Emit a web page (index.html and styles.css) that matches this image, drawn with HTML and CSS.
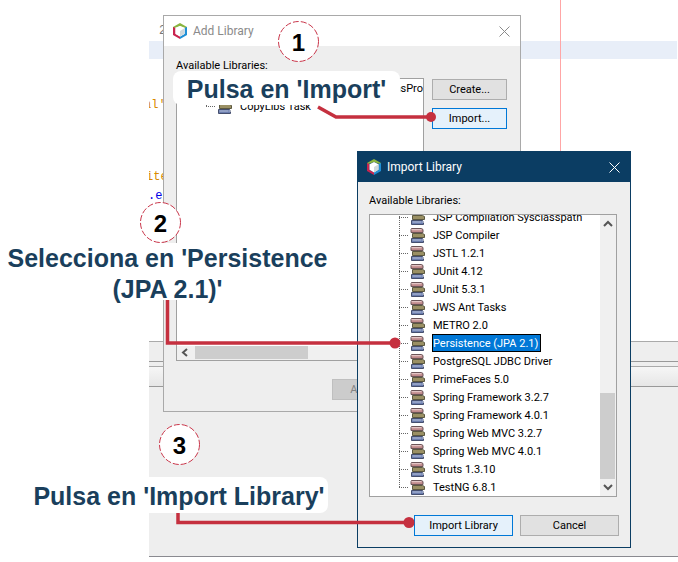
FILE: index.html
```html
<!DOCTYPE html>
<html lang="es">
<head>
    <meta charset="UTF-8">
    <title>Import Library</title>
    <link rel="stylesheet" href="styles.css">
</head>
<body>
    <svg class="defs" width="0" height="0">
        <symbol id="nb" viewBox="0 0 16 16">
            <polygon points="8,0 15,4 15,5.5 8,3 1,5.5 1,4" fill="#8ab53f"/>
            <polygon points="1,4 3.5,5 3.5,11 8,13.5 8,16 1,12" fill="#c9244f"/>
            <polygon points="15,4 12.5,5 12.5,11 8,13.5 8,16 15,12" fill="#1f8fd6"/>
            <polygon points="8,3 12.5,5.3 12.5,10.8 8,13.4 3.5,10.8 3.5,5.3" fill="#fff"/>
            <polygon points="8,8 12.5,5.3 12.5,10.8 8,13.4" fill="#cfd8dc"/>
        </symbol>
        <symbol id="books" viewBox="0 0 15 15">
            <path d="M1.5 .5h10l1.500 1v3h-12v-3z" fill="#c08a8c" stroke="#6b5558"/>
            <path d="M1.500 1.700h10" stroke="#ecd3d3" fill="none"/>
            <path d="M2.500 5.500h10l2 1v3h-12z" fill="#9a9064" stroke="#5b5840"/>
            <path d="M1.500 10.500h11l1 1v3h-12z" fill="#6b7dae" stroke="#454f6e"/>
            <path d="M12.500 12h2v-2" stroke="#fff" fill="none"/>
            <path d="M2.500 12h9" stroke="#b9c4dc" fill="none"/>
        </symbol>
    </svg>

    <div class="stage">
        <div class="editor">
            <div class="band"></div>
            <span class="gutter-line"></span>
            <span class="code code-dark code-a">2</span>
            <span class="code code-orange code-b">al'</span>
            <span class="code code-orange code-c">ite</span>
            <span class="code code-blue code-d">.ex</span>
        </div>
        <div class="ide-panel">
            <div class="panel-head"></div>
            <div class="panel-tabs"></div>
            <div class="panel-rest"></div>
        </div>

        <div class="dialog dialog-add">
            <div class="titlebar">
                <svg class="app-icon"><use href="#nb"/></svg>
                <span class="title">Add Library</span>
                <svg class="close" viewBox="0 0 11 11"><path d="M.5 .5l10 10M10.500 .5l-10 10"/></svg>
            </div>
            <div class="dialog-body">
                <div class="caption">Available Libraries:</div>
                <div class="list-line">
                    <div class="list list-add">
                        <div class="rows">
                            <div class="row row-clipped"><span class="name">nsPro</span></div>
                            <div class="row row-last">
                                <span class="branch"></span>
                                <svg class="book"><use href="#books"/></svg>
                                <span class="name">CopyLibs Task</span>
                            </div>
                        </div>
                        <div class="hscroll">
                            <svg class="arrow" viewBox="0 0 17 13"><path d="M10 3l-4 3.500 4 3.500"/></svg>
                            <div class="hthumb"></div>
                        </div>
                    </div>
                    <div class="actions">
                        <button class="btn">Create...</button>
                        <button class="btn btn-focus">Import...</button>
                    </div>
                </div>
                <div class="footer-add"><button class="btn btn-off">Add Library</button></div>
            </div>
        </div>

        <div class="dialog dialog-import">
            <div class="titlebar titlebar-dark">
                <svg class="app-icon"><use href="#nb"/></svg>
                <span class="title">Import Library</span>
                <svg class="close" viewBox="0 0 11 11"><path d="M.5 .5l10 10M10.500 .5l-10 10"/></svg>
            </div>
            <div class="dialog-body">
                <div class="caption">Available Libraries:</div>
                <div class="list list-import">
                    <div class="rows rows-scrolled">
                        <div class="row"><span class="branch"></span><svg class="book"><use href="#books"/></svg><span class="name">JSP Compilation Sysclasspath</span></div>
                        <div class="row"><span class="branch"></span><svg class="book"><use href="#books"/></svg><span class="name">JSP Compiler</span></div>
                        <div class="row"><span class="branch"></span><svg class="book"><use href="#books"/></svg><span class="name">JSTL 1.2.1</span></div>
                        <div class="row"><span class="branch"></span><svg class="book"><use href="#books"/></svg><span class="name">JUnit 4.12</span></div>
                        <div class="row"><span class="branch"></span><svg class="book"><use href="#books"/></svg><span class="name">JUnit 5.3.1</span></div>
                        <div class="row"><span class="branch"></span><svg class="book"><use href="#books"/></svg><span class="name">JWS Ant Tasks</span></div>
                        <div class="row"><span class="branch"></span><svg class="book"><use href="#books"/></svg><span class="name">METRO 2.0</span></div>
                        <div class="row"><span class="branch"></span><svg class="book"><use href="#books"/></svg><span class="name selected">Persistence (JPA 2.1)</span></div>
                        <div class="row"><span class="branch"></span><svg class="book"><use href="#books"/></svg><span class="name">PostgreSQL JDBC Driver</span></div>
                        <div class="row"><span class="branch"></span><svg class="book"><use href="#books"/></svg><span class="name">PrimeFaces 5.0</span></div>
                        <div class="row"><span class="branch"></span><svg class="book"><use href="#books"/></svg><span class="name">Spring Framework 3.2.7</span></div>
                        <div class="row"><span class="branch"></span><svg class="book"><use href="#books"/></svg><span class="name">Spring Framework 4.0.1</span></div>
                        <div class="row"><span class="branch"></span><svg class="book"><use href="#books"/></svg><span class="name">Spring Web MVC 3.2.7</span></div>
                        <div class="row"><span class="branch"></span><svg class="book"><use href="#books"/></svg><span class="name">Spring Web MVC 4.0.1</span></div>
                        <div class="row"><span class="branch"></span><svg class="book"><use href="#books"/></svg><span class="name">Struts 1.3.10</span></div>
                        <div class="row row-last"><span class="branch"></span><svg class="book"><use href="#books"/></svg><span class="name">TestNG 6.8.1</span></div>
                    </div>
                    <div class="vscroll">
                        <svg class="arrow-v" viewBox="0 0 16 17"><path d="M4 11l4-4 4 4"/></svg>
                        <div class="vtrack"><div class="vthumb"></div></div>
                        <svg class="arrow-v" viewBox="0 0 16 17"><path d="M4 6l4 4 4-4"/></svg>
                    </div>
                </div>
                <div class="footer-import">
                    <button class="btn btn-wide btn-focus">Import Library</button>
                    <button class="btn btn-wide">Cancel</button>
                </div>
            </div>
        </div>

        <svg class="connectors" viewBox="0 0 678 562">
            <path d="M318 107l18 10h95"/>
            <circle cx="431" cy="117" r="5"/>
            <path d="M167.500 300v43H395"/>
            <circle cx="395" cy="343" r="5.500"/>
            <path d="M178 513v9.500h231"/>
            <circle cx="409" cy="522.500" r="5.500"/>
        </svg>

        <div class="step step-1"><svg class="ring" viewBox="0 0 41 41"><circle cx="20.500" cy="20.500" r="20"/></svg><span class="digit">1</span></div>
        <div class="step step-2"><svg class="ring" viewBox="0 0 41 41"><circle cx="20.500" cy="20.500" r="20"/></svg><span class="digit">2</span></div>
        <div class="step step-3"><svg class="ring" viewBox="0 0 41 41"><circle cx="20.500" cy="20.500" r="20"/></svg><span class="digit">3</span></div>

        <div class="note note-1">Pulsa en 'Import'</div>
        <div class="note note-2">Selecciona en 'Persistence<br>(JPA 2.1)'</div>
        <div class="note note-3">Pulsa en 'Import Library'</div>
    </div>
</body>
</html>
```

FILE: styles.css
```css
* {
    box-sizing: border-box;
}
body {
    margin: 0;
    background-color: #fff;
    font-family: Roboto, "Noto Sans", sans-serif;
    font-size: 11px;
    color: #000;
}
.defs {
    display: block;
    height: 0;
}
.stage {
    position: relative;
    width: 678px;
    height: 562px;
    overflow: hidden;
}

/* ide behind the dialogs */
.editor {
    position: relative;
    height: 341px;
    padding: 41px 1px 0 149px;
}
.band {
    height: 18px;
    background-color: #e8eef8;
}
.gutter-line {
    position: absolute;
    left: 560px;
    top: 0;
    width: 1px;
    height: 341px;
    background-color: #ffa6a6;
}
.code {
    position: absolute;
    left: 149px;
    width: 15px;
    overflow: hidden;
    white-space: nowrap;
    font-family: "Liberation Mono", monospace;
    font-size: 12px;
    line-height: 14px;
}
.code-dark {
    color: #777;
}
.code-orange {
    color: #d98a00;
}
.code-blue {
    color: #0000e6;
}
.code-a {
    left: 159px;
    width: 5px;
    top: 24px;
}
.code-b {
    top: 98px;
    text-indent: -5px;
}
.code-c {
    top: 170px;
    text-indent: -3px;
}
.code-d {
    top: 189px;
    text-indent: -1px;
}
.ide-panel {
    height: 216px;
    margin-left: 149px;
    background-color: #eee;
    border-top: 1px solid #aaa;
    border-bottom: 1px solid #8a8a90;
    display: flex;
    flex-direction: column;
}
.panel-head {
    height: 20px;
    border-bottom: 1px solid #999;
}
.panel-tabs {
    height: 21px;
    margin-top: 4px;
    border-top: 1px solid #aaa;
    border-bottom: 1px solid #999;
    background: linear-gradient(#f6f6f6, #e6e6e6);
}
.panel-rest {
    flex: 1;
}

/* dialogs */
.dialog {
    position: absolute;
    display: flex;
    flex-direction: column;
    height: 397px;
    background-color: #eee;
    border: 1px solid #a9a9a9;
}
.dialog-add {
    left: 163px;
    top: 15px;
    width: 358px;
}
.dialog-import {
    left: 357px;
    top: 151px;
    width: 274px;
    border-color: #0b3d63;
}
.titlebar {
    display: flex;
    align-items: center;
    height: 30px;
    padding: 0 10px 0 8px;
    background-color: #fff;
    color: #8a8a8a;
}
.titlebar-dark {
    background-color: #0b3d63;
    color: #fff;
}
.app-icon {
    width: 16px;
    height: 16px;
    flex: none;
}
.title {
    flex: 1;
    margin-left: 5px;
    font-size: 12px;
}
.close {
    width: 11px;
    height: 11px;
    stroke: #8a8a8a;
    fill: none;
}
.titlebar-dark .close {
    stroke: #fff;
}
.dialog-body {
    flex: 1;
    padding: 12px 12px 0;
}
.dialog-import .dialog-body {
    padding: 11px 11px 0;
}
.caption {
    height: 14px;
    line-height: 16px;
    margin-bottom: 6px;
}
.dialog-import .caption {
    margin-bottom: 7px;
}
.list-line {
    display: flex;
    gap: 8px;
}
.list {
    display: flex;
    width: 248px;
    height: 283px;
    background-color: #fff;
    border: 1px solid #a0a0a0;
    overflow: hidden;
}
.list-add {
    flex-direction: column;
    flex: none;
}
.rows {
    flex: 1;
    min-width: 0;
    overflow: hidden;
}
.rows-scrolled .row:first-child {
    margin-top: -7px;
}
.row {
    display: flex;
    align-items: center;
    height: 18px;
    padding-left: 29px;
    white-space: nowrap;
}
.row-clipped {
    justify-content: flex-end;
    padding-left: 0;
    margin-right: -3px;
}
.branch {
    flex: none;
    align-self: stretch;
    width: 11px;
    background-image:
        repeating-linear-gradient(to bottom, #666 0 1px, transparent 1px 2px),
        repeating-linear-gradient(to right, #666 0 1px, transparent 1px 2px);
    background-size: 1px 100%, 10px 1px;
    background-position: 0 0, 0 9px;
    background-repeat: no-repeat;
}
.row-last .branch {
    background-size: 1px 10px, 10px 1px;
}
.book {
    flex: none;
    width: 15px;
    height: 15px;
}
.name {
    margin-left: 7px;
    padding: 0 3px 0 1px;
    height: 18px;
    line-height: 20px;
}
.selected {
    background-color: #0078d7;
    color: #fff;
    box-shadow: inset 0 0 0 1px #000;
}

/* scrollbars */
.hscroll {
    display: flex;
    flex: none;
    height: 14px;
    background-color: #f0f0f0;
}
.arrow {
    width: 17px;
    height: 13px;
    flex: none;
    fill: none;
    stroke: #555;
    stroke-width: 2;
}
.hthumb {
    width: 113px;
    height: 13px;
    margin-left: 1px;
    background-color: #cdcdcd;
}
.vscroll {
    display: flex;
    flex-direction: column;
    flex: none;
    width: 16px;
    background-color: #f0f0f0;
}
.arrow-v {
    width: 16px;
    height: 17px;
    flex: none;
    fill: none;
    stroke: #555;
    stroke-width: 2;
}
.vtrack {
    flex: 1;
    padding: 161px 1px 0 0;
}
.vthumb {
    height: 100%;
    background-color: #cdcdcd;
}

/* buttons */
.btn {
    display: block;
    width: 75px;
    height: 21px;
    padding: 0;
    background-color: #e1e1e1;
    border: 1px solid #adadad;
    font-family: inherit;
    font-size: 11px;
    color: #000;
}
.btn-focus {
    background-color: #e5f1fb;
    border-color: #0078d7;
}
.btn-off {
    width: 92px;
    background-color: #ccc;
    border-color: #bfbfbf;
    color: #838383;
}
.btn-wide {
    width: 99px;
}
.actions {
    display: flex;
    flex-direction: column;
    gap: 8px;
    padding-top: 1px;
}
.footer-add {
    margin-top: 18px;
    padding-left: 156px;
}
.footer-import {
    display: flex;
    gap: 7px;
    margin-top: 18px;
    padding-left: 45px;
}

/* annotations on top of the screenshot */
.connectors {
    position: absolute;
    left: 0;
    top: 0;
    width: 678px;
    height: 562px;
    fill: none;
    stroke: #c5303f;
    stroke-width: 3.5;
}
.connectors circle {
    fill: #c5303f;
    stroke: none;
}
.step {
    position: absolute;
    display: flex;
    align-items: center;
    justify-content: center;
    width: 41px;
    height: 41px;
    padding-top: 3px;
    font-family: "Liberation Sans", Arial, sans-serif;
    font-size: 24px;
    font-weight: bold;
}
.ring {
    position: absolute;
    left: 0;
    top: 0;
    width: 41px;
    height: 41px;
    fill: #fff;
    stroke: #c9364a;
    stroke-width: 1;
    stroke-dasharray: 6 2;
}
.digit {
    position: relative;
}
.step-1 {
    left: 278px;
    top: 21px;
}
.step-2 {
    left: 140px;
    top: 202px;
}
.step-3 {
    left: 159px;
    top: 424px;
}
.note {
    position: absolute;
    background-color: #fff;
    border-radius: 8px;
    text-align: center;
    font-family: "Liberation Sans", Arial, sans-serif;
    font-size: 25px;
    font-weight: bold;
    line-height: 31px;
    color: #1a3f5c;
}
.note-1 {
    left: 173px;
    top: 71px;
    width: 227px;
    height: 34px;
    padding-top: 3px;
}
.note-2 {
    left: 0;
    top: 243px;
    width: 335px;
    height: 57px;
}
.note-3 {
    left: 30px;
    top: 477px;
    width: 298px;
    height: 36px;
    padding-top: 4px;
}
```
